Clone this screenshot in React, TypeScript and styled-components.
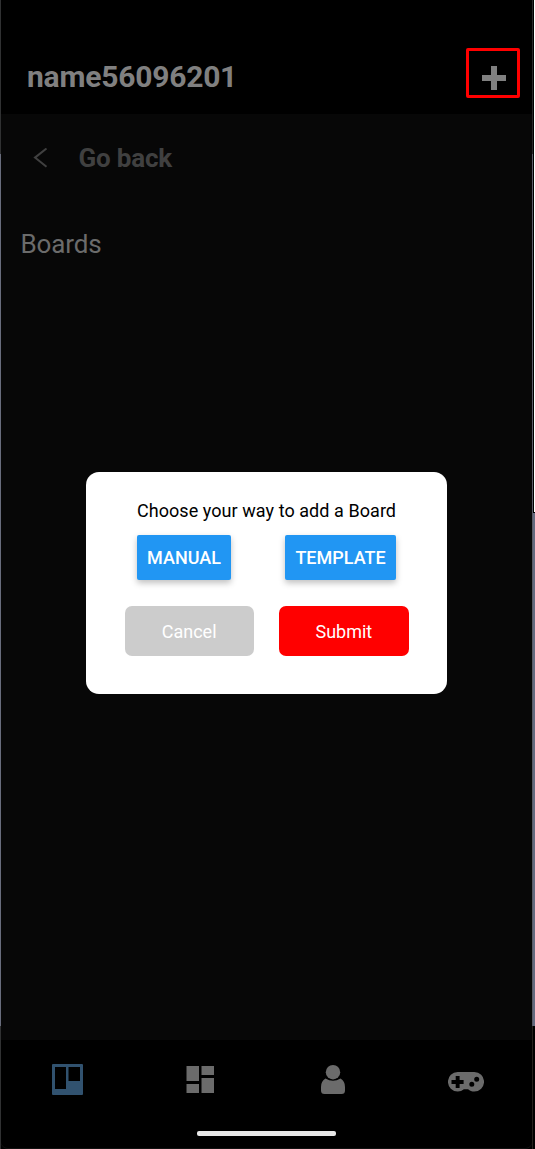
import React from 'react';
import styled, { createGlobalStyle } from 'styled-components';

const GlobalStyle = createGlobalStyle`
  * { box-sizing: border-box; }
  body { margin: 0; background: #000; font-family: Roboto, sans-serif; }
  button { font-family: inherit; border: 0; padding: 0; cursor: pointer; }
`;

const Frame = styled.div`
  position: relative;
  display: flex;
  width: 535px;
  height: 1149px;
  overflow: hidden;
  background: #000;
`;

const LeftEdge = styled.div`
  width: 1px;
  background: linear-gradient(#303132 0 154px, #686c7c 154px 1026px, #303132 1026px);
`;

const RightEdge = styled.div`
  display: flex;
  width: 3px;
`;

const Rim = styled.div`
  width: 1px;
  background: linear-gradient(#29292b 0 154px, #5a5c68 154px 1026px, #24211d 1026px);
`;

const Gap = styled.div`
  width: 1px;
  background: linear-gradient(#000 0 513px, #646b80 513px 1026px, #000 1026px);
`;

const Desktop = styled.div`
  width: 1px;
  background: linear-gradient(#fff 0 512px, #000 512px 513px, #646b80 513px 1026px, #000 1026px);
`;

const Screen = styled.div`
  display: flex;
  flex-direction: column;
  width: 531px;
  background: #070707;
  border-radius: 0 0 6px 6px;
`;

const Header = styled.header`
  display: flex;
  justify-content: space-between;
  height: 114px;
  padding: 48px 12px 0 26px;
  background: #000;
`;

const Title = styled.h1`
  margin: 10px 0 0;
  font-size: 30px;
  line-height: 38px;
  font-weight: 700;
  letter-spacing: -0.22px;
  color: #808080;
`;

const AddButton = styled.button`
  display: flex;
  align-items: flex-start;
  width: 54px;
  height: 50px;
  padding: 15px 0 0 13px;
  border: 3px solid #f00;
  border-radius: 2px;
  background: transparent;
`;

const Content = styled.main`
  flex: 1;
`;

const BackRow = styled.div`
  display: flex;
  align-items: center;
  height: 87px;
  padding-left: 31.5px;
`;

const BackLabel = styled.span`
  margin: 1px 0 0 31px;
  font-size: 26px;
  font-weight: 700;
  letter-spacing: -0.2px;
  color: #404040;
`;

const Section = styled.h2`
  margin: 28px 0 0 19.5px;
  font-size: 26px;
  line-height: 30px;
  font-weight: 400;
  letter-spacing: -0.15px;
  color: #6b6b6b;
`;

const TabBar = styled.nav`
  display: grid;
  grid-template-columns: repeat(4, 1fr);
  height: 91px;
  background: #000;
`;

const Tab = styled.a<{ $active?: boolean; $drop?: number }>`
  display: flex;
  justify-content: center;
  align-items: center;
  height: 79px;
  padding-top: ${(p) => p.$drop ?? 0}px;
  color: ${(p) => (p.$active ? '#31526f' : '#6b6b6b')};
`;

const TabBarArea = styled.div`
  height: 109px;
  background: #000;
  border-radius: 0 0 7px 7px;
  border-bottom: 1px solid #111;
`;

const HomeBar = styled.div`
  width: 139px;
  height: 5px;
  margin: 0 auto;
  border-radius: 2px;
  background: #e8e8e8;
`;

const Overlay = styled.div`
  position: absolute;
  inset: 0;
  display: flex;
  justify-content: center;
  align-items: flex-start;
  padding: 472px 2px 0 0;
`;

const Dialog = styled.div`
  width: 361px;
  height: 222px;
  padding: 27px 38.5px 0;
  border-radius: 13px;
  background: #fff;
`;

const Prompt = styled.p`
  margin: 0 0 12px;
  font-size: 18px;
  line-height: 24px;
  letter-spacing: 0.06px;
  text-align: center;
  white-space: nowrap;
  color: #000;
`;

const Choices = styled.div`
  display: flex;
  justify-content: space-between;
  padding: 0 12.5px;
`;

const Choice = styled.button<{ $width: number }>`
  width: ${(p) => p.$width}px;
  height: 45px;
  border-radius: 2px;
  background: #2196f3;
  color: #fff;
  font-size: 18px;
  font-weight: 500;
  box-shadow: 0 3px 6px rgba(0, 0, 0, 0.25);
`;

const Actions = styled.div`
  display: flex;
  justify-content: space-between;
  margin-top: 26px;
`;

const Action = styled.button<{ $color: string }>`
  width: 129.3px;
  height: 50px;
  border-radius: 7px;
  background: ${(p) => p.$color};
  color: #fff;
  font-size: 18px;
`;

const PlusIcon = () => (
  <svg width="24" height="24" viewBox="0 0 24 24" fill="#808080">
    <path d="M9 0h6v9h9v6h-9v9H9v-9H0V9h9z" />
  </svg>
);

const ChevronIcon = () => (
  <svg width="15" height="20" viewBox="0 0 15 20" fill="none" stroke="#404040" strokeWidth="2">
    <path d="M13.5 .5 2 9.600l11.500 9.100" />
  </svg>
);

const BoardIcon = () => (
  <svg width="31" height="31" viewBox="0 0 31 31" fill="currentColor">
    <path fillRule="evenodd" d="M1 0h29a1 1 0 0 1 1 1v29a1 1 0 0 1-1 1H1a1 1 0 0 1-1-1V1a1 1 0 0 1 1-1zM3 3v22h11V3zM16.500 3v14H28V3z" />
  </svg>
);

const DashboardIcon = () => (
  <svg width="28" height="27" viewBox="0 0 28 27" fill="currentColor">
    <path d="M.5 0H13v15H.5zM15.500 0H28v9H15.500zM.5 18H13v9H.5zM15.500 12H28v15H15.500z" />
  </svg>
);

const PersonIcon = () => (
  <svg width="24" height="29" viewBox="0 0 24 29" fill="currentColor">
    <circle cx="12" cy="7.200" r="7.200" />
    <path d="M4.500 13.500Q12 18 19.500 13.500Q24 16 24 22V25.500Q24 29 20.500 29H3.500Q0 29 0 25.500V22Q0 16 4.500 13.500z" />
  </svg>
);

const GamepadIcon = () => (
  <svg width="36" height="20" viewBox="0 0 36 20" fill="currentColor">
    <path fillRule="evenodd" d="M9.700 0h16.600a9.700 9.700 0 0 1 0 19.500c-2.400 0-4.500-.8-6.200-2.300h-4.200a9.300 9.300 0 0 1-6.200 2.300A9.700 9.700 0 0 1 9.700 0zM7.700 4v4H3.500v4h4.200v4h3.900v-4h4V8h-4V4zM28.700 4.800a2.500 2.500 0 1 0 0 5 2.500 2.500 0 0 0 0-5zM23.800 9.800a2.500 2.500 0 1 0 0 5 2.500 2.500 0 0 0 0-5z" />
  </svg>
);

export default function App() {
  return (
    <>
      <GlobalStyle />
      <Frame>
        <LeftEdge />
        <Screen>
          <Header>
            <Title>name56096201</Title>
            <AddButton aria-label="Add board"><PlusIcon /></AddButton>
          </Header>
          <Content>
            <BackRow>
              <ChevronIcon />
              <BackLabel>Go back</BackLabel>
            </BackRow>
            <Section>Boards</Section>
          </Content>
          <TabBarArea>
            <TabBar>
              <Tab $active><BoardIcon /></Tab>
              <Tab><DashboardIcon /></Tab>
              <Tab><PersonIcon /></Tab>
              <Tab $drop={5}><GamepadIcon /></Tab>
            </TabBar>
            <HomeBar />
          </TabBarArea>
        </Screen>
        <RightEdge>
          <Rim />
          <Gap />
          <Desktop />
        </RightEdge>
        <Overlay>
          <Dialog role="dialog">
            <Prompt>Choose your way to add a Board</Prompt>
            <Choices>
              <Choice $width={94}>MANUAL</Choice>
              <Choice $width={111}>TEMPLATE</Choice>
            </Choices>
            <Actions>
              <Action $color="#ccc">Cancel</Action>
              <Action $color="#f00">Submit</Action>
            </Actions>
          </Dialog>
        </Overlay>
      </Frame>
    </>
  );
}
